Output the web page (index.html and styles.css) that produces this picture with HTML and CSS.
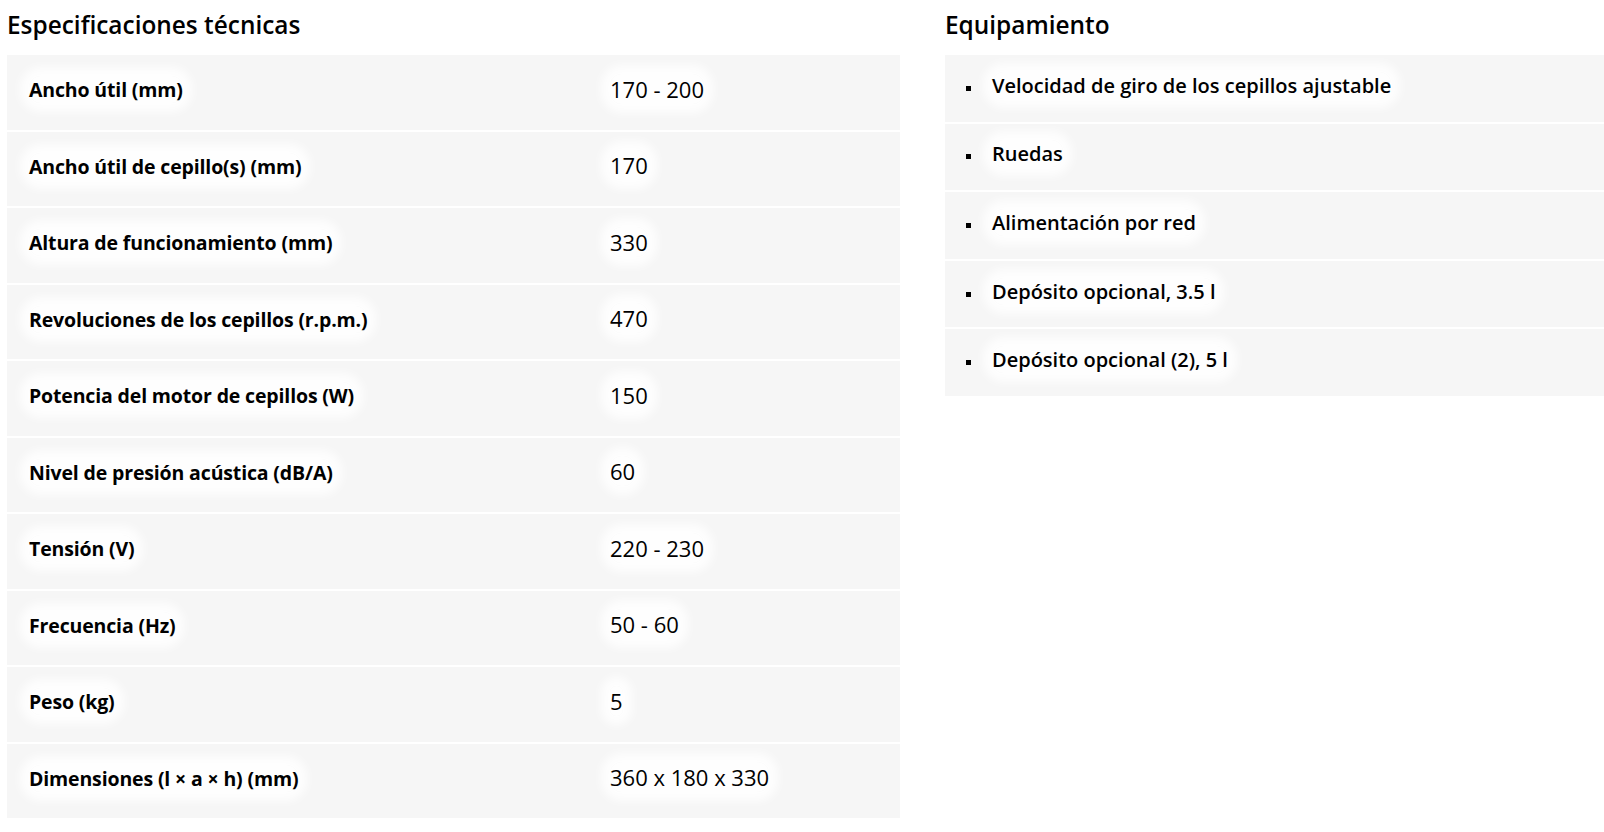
FILE: index.html
```html
<!DOCTYPE html>
<html lang="es">
<head>
<meta charset="utf-8">
<title>Especificaciones técnicas</title>
<link rel="stylesheet" href="styles.css">
</head>
<body>
<div class="page">
  <section class="specs">
    <h2 class="title">Especificaciones técnicas</h2>
    <div class="table">
      <div class="row"><div class="label"><span class="glow">Ancho útil (mm)</span></div><div class="value"><span class="glow">170 - 200</span></div></div>
      <div class="row"><div class="label"><span class="glow">Ancho útil de cepillo(s) (mm)</span></div><div class="value"><span class="glow">170</span></div></div>
      <div class="row"><div class="label"><span class="glow">Altura de funcionamiento (mm)</span></div><div class="value"><span class="glow">330</span></div></div>
      <div class="row"><div class="label"><span class="glow">Revoluciones de los cepillos (r.p.m.)</span></div><div class="value"><span class="glow">470</span></div></div>
      <div class="row"><div class="label"><span class="glow">Potencia del motor de cepillos (W)</span></div><div class="value"><span class="glow">150</span></div></div>
      <div class="row"><div class="label"><span class="glow">Nivel de presión acústica (dB/A)</span></div><div class="value"><span class="glow">60</span></div></div>
      <div class="row"><div class="label"><span class="glow">Tensión (V)</span></div><div class="value"><span class="glow">220 - 230</span></div></div>
      <div class="row"><div class="label"><span class="glow">Frecuencia (Hz)</span></div><div class="value"><span class="glow">50 - 60</span></div></div>
      <div class="row"><div class="label"><span class="glow">Peso (kg)</span></div><div class="value"><span class="glow">5</span></div></div>
      <div class="row"><div class="label"><span class="glow">Dimensiones (l × a × h) (mm)</span></div><div class="value"><span class="glow">360 x 180 x 330</span></div></div>
    </div>
  </section>
  <section class="equip">
    <h2 class="title">Equipamiento</h2>
    <ul class="list">
      <li class="item"><span class="glow">Velocidad de giro de los cepillos ajustable</span></li>
      <li class="item"><span class="glow">Ruedas</span></li>
      <li class="item"><span class="glow">Alimentación por red</span></li>
      <li class="item"><span class="glow">Depósito opcional, 3.5 l</span></li>
      <li class="item"><span class="glow">Depósito opcional (2), 5 l</span></li>
    </ul>
  </section>
</div>
</body>
</html>
```
FILE: styles.css
```css
html, body {
  margin: 0;
  padding: 0;
  background: #ffffff;
}
body {
  font-family: "Open Sans", "Noto Sans", "Liberation Sans", sans-serif;
  color: #000;
}
.page {
  display: flex;
  gap: 45px;
  padding: 9px 0 0 7px;
}
.specs {
  width: 893px;
  flex: none;
}
.equip {
  flex: 1;
}
.title {
  margin: 0 0 14px 0;
  font-size: 24.4px;
  line-height: 32px;
  font-weight: 600;
  letter-spacing: 0;
}
.table {
  display: flex;
  flex-direction: column;
  gap: 2px;
}
.row {
  display: grid;
  grid-template-columns: 581px 1fr;
  height: 74.5px;
  background: #f6f6f6;
}
.label, .value {
  display: flex;
  align-items: center;
  padding: 0 22px 5px 22px;
}
.label {
  font-weight: 700;
  font-size: 19.5px;
  letter-spacing: -0.15px;
}
.value {
  font-weight: 400;
  font-size: 22px;
  padding-bottom: 7px;
}
.glow {
  background: rgba(255, 255, 255, 0.85);
  border-radius: 12px;
  box-shadow: 0 0 10px 9px rgba(255, 255, 255, 0.85);
}
.list {
  list-style: none;
  margin: 0;
  padding: 0;
  display: flex;
  flex-direction: column;
  gap: 2px;
}
.item {
  display: flex;
  align-items: center;
  height: 66.6px;
  padding: 0 0 6px 21px;
  box-sizing: border-box;
  background: #f6f6f6;
  font-size: 20px;
  font-weight: 600;
  letter-spacing: 0;
}
.item::before {
  content: "";
  width: 5px;
  height: 5px;
  background: #000;
  margin: 6px 21px 0 0;
  flex: none;
}
```
